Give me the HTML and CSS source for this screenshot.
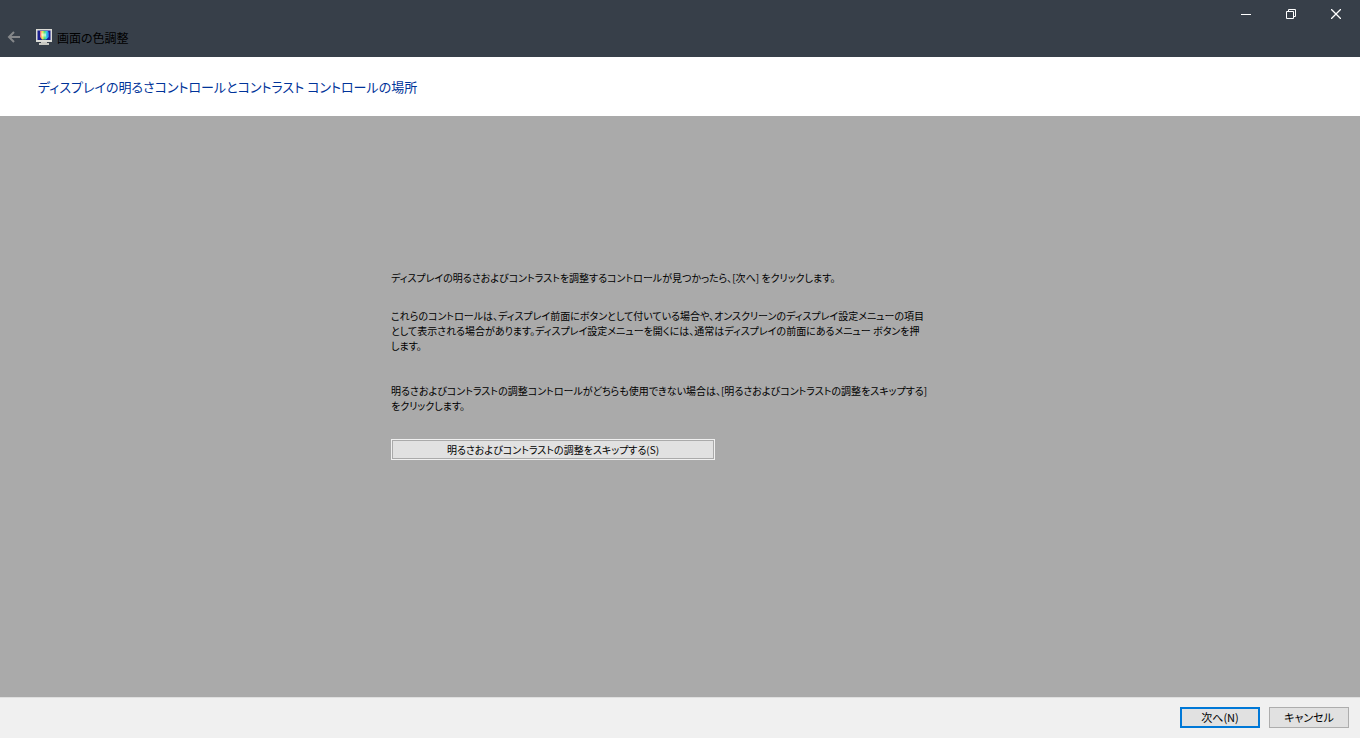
FILE: index.html
```html
<!DOCTYPE html>
<html lang="ja">
<head>
<meta charset="utf-8">
<title>画面の色調整</title>
<link rel="stylesheet" href="styles.css">
</head>
<body>
<div class="window">
  <header class="titlebar">
    <div class="app">
      <button class="back" type="button" aria-label="戻る" disabled>
        <svg width="14" height="12" viewBox="0 0 14 12" fill="none" stroke="#85878a" stroke-width="2"><path d="M13 6H2M7 1L2 6l5 5"/></svg>
      </button>
      <svg class="app-icon" width="16" height="16" viewBox="0 0 16 16" aria-hidden="true">
        <defs>
          <linearGradient id="hue"><stop offset="0" stop-color="#f0508c"/><stop offset=".25" stop-color="#f8e850"/><stop offset=".5" stop-color="#50e070"/><stop offset=".75" stop-color="#30c8f0"/><stop offset="1" stop-color="#3050e0"/></linearGradient>
          <linearGradient id="glow" x2="0" y2="1"><stop offset="0" stop-color="#fff" stop-opacity="0"/><stop offset=".5" stop-color="#fff" stop-opacity=".7"/><stop offset="1" stop-color="#fff" stop-opacity="0"/></linearGradient>
        </defs>
        <path d="M0 0h16v13H0z" fill="#dcdcd6"/>
        <path d="M1.500 1.500h13v9.500h-13z" fill="#1c2090"/>
        <path d="M4 2h8l1 2v4l-3 2.500H6L4 8z" fill="url(#hue)"/>
        <path d="M5 3h5v6H6z" fill="url(#glow)"/>
        <path d="M5 13h6v1h2v2H3v-2h2z" fill="#c8c8c2"/>
      </svg>
      <span class="app-name">画面の色調整</span>
    </div>
    <div class="controls">
      <button type="button" aria-label="最小化"><svg width="10" height="10" shape-rendering="crispEdges"><path d="M0 5h10v1H0z" fill="#fff"/></svg></button>
      <button type="button" aria-label="元に戻す"><svg width="10" height="10" viewBox="0 0 10 10" fill="none" stroke="#fff"><path d="M.5 2.500h7v7h-7zM2.500 2.500v-2h7v7h-2"/></svg></button>
      <button type="button" aria-label="閉じる"><svg width="10" height="10" viewBox="0 0 10 10" fill="none" stroke="#fff" stroke-width="1.300"><path d="M0 0l10 10M10 0L0 10"/></svg></button>
    </div>
  </header>
  <h1 class="heading">ディスプレイの明るさコントロールとコントラスト コントロールの場所</h1>
  <main class="content">
    <div class="instructions">
      <p class="lead">ディスプレイの明るさおよびコントラストを調整するコントロールが見つかったら、[次へ] をクリックします。</p>
      <p class="detail">これらのコントロールは、ディスプレイ前面にボタンとして付いている場合や、オンスクリーンのディスプレイ設定メニューの項目<br>として表示される場合があります。ディスプレイ設定メニューを開くには、通常はディスプレイの前面にあるメニュー ボタンを押<br>します。</p>
      <p class="fallback">明るさおよびコントラストの調整コントロールがどちらも使用できない場合は、[明るさおよびコントラストの調整をスキップする]<br>をクリックします。</p>
      <button class="button skip" type="button">明るさおよびコントラストの調整をスキップする(S)</button>
    </div>
  </main>
  <footer class="footer">
    <button class="button primary" type="button">次へ(N)</button>
    <button class="button" type="button">キャンセル</button>
  </footer>
</div>
</body>
</html>
```
FILE: styles.css
```css
* { box-sizing: border-box; }
body {
  margin: 0;
  font-family: "Noto Sans CJK JP", sans-serif;
  font-size: 11px;
  line-height: 15px;
  font-feature-settings: "palt";
  color: #000;
}
button { font: inherit; font-feature-settings: inherit; color: inherit; margin: 0; padding: 0; }
svg { display: block; }
.window { min-height: 100vh; display: flex; flex-direction: column; }
.titlebar {
  display: flex;
  justify-content: space-between;
  align-items: flex-start;
  height: 57px;
  background: #373f49;
}
.app { display: flex; align-items: center; padding: 28px 0 0 7px; height: 46px; }
.back { border: 0; background: none; margin-right: 15px; }
.app-icon { margin-right: 5px; }
.app-name { font-size: 12px; }
.controls { display: flex; padding-right: 2px; }
.controls button {
  display: flex;
  align-items: center;
  justify-content: center;
  width: 45px;
  height: 28px;
  border: 0;
  background: none;
}
.heading {
  margin: 0;
  padding: 18px 38px 17px;
  background: #fff;
  color: #003399;
  font-size: 13px;
  line-height: 24px;
  font-weight: 400;
}
.content { flex: 1; display: flex; justify-content: center; background: #aaa; padding-top: 154px; }
.instructions { width: 578px; white-space: nowrap; font-size: 10px; }
.instructions p { margin: 0; }
.instructions .lead { margin-bottom: 23px; }
.instructions .detail { margin-bottom: 30px; }
.instructions .fallback { margin-bottom: 27px; }
.button {
  width: 80px;
  height: 21px;
  border: 1px solid #adadad;
  background: #e1e1e1;
  line-height: 15px;
}
.skip { width: 322px; height: 19px; margin-left: 1px; outline: 1px solid #f0f0f0; border-color: #aaa; }
.primary { border: 2px solid #0078d7; }
.footer {
  display: flex;
  justify-content: flex-end;
  align-items: flex-start;
  gap: 9px;
  padding: 9px 11px;
  height: 41px;
  background: #f0f0f0;
  border-top: 1px solid #dfdfdf;
}
```
